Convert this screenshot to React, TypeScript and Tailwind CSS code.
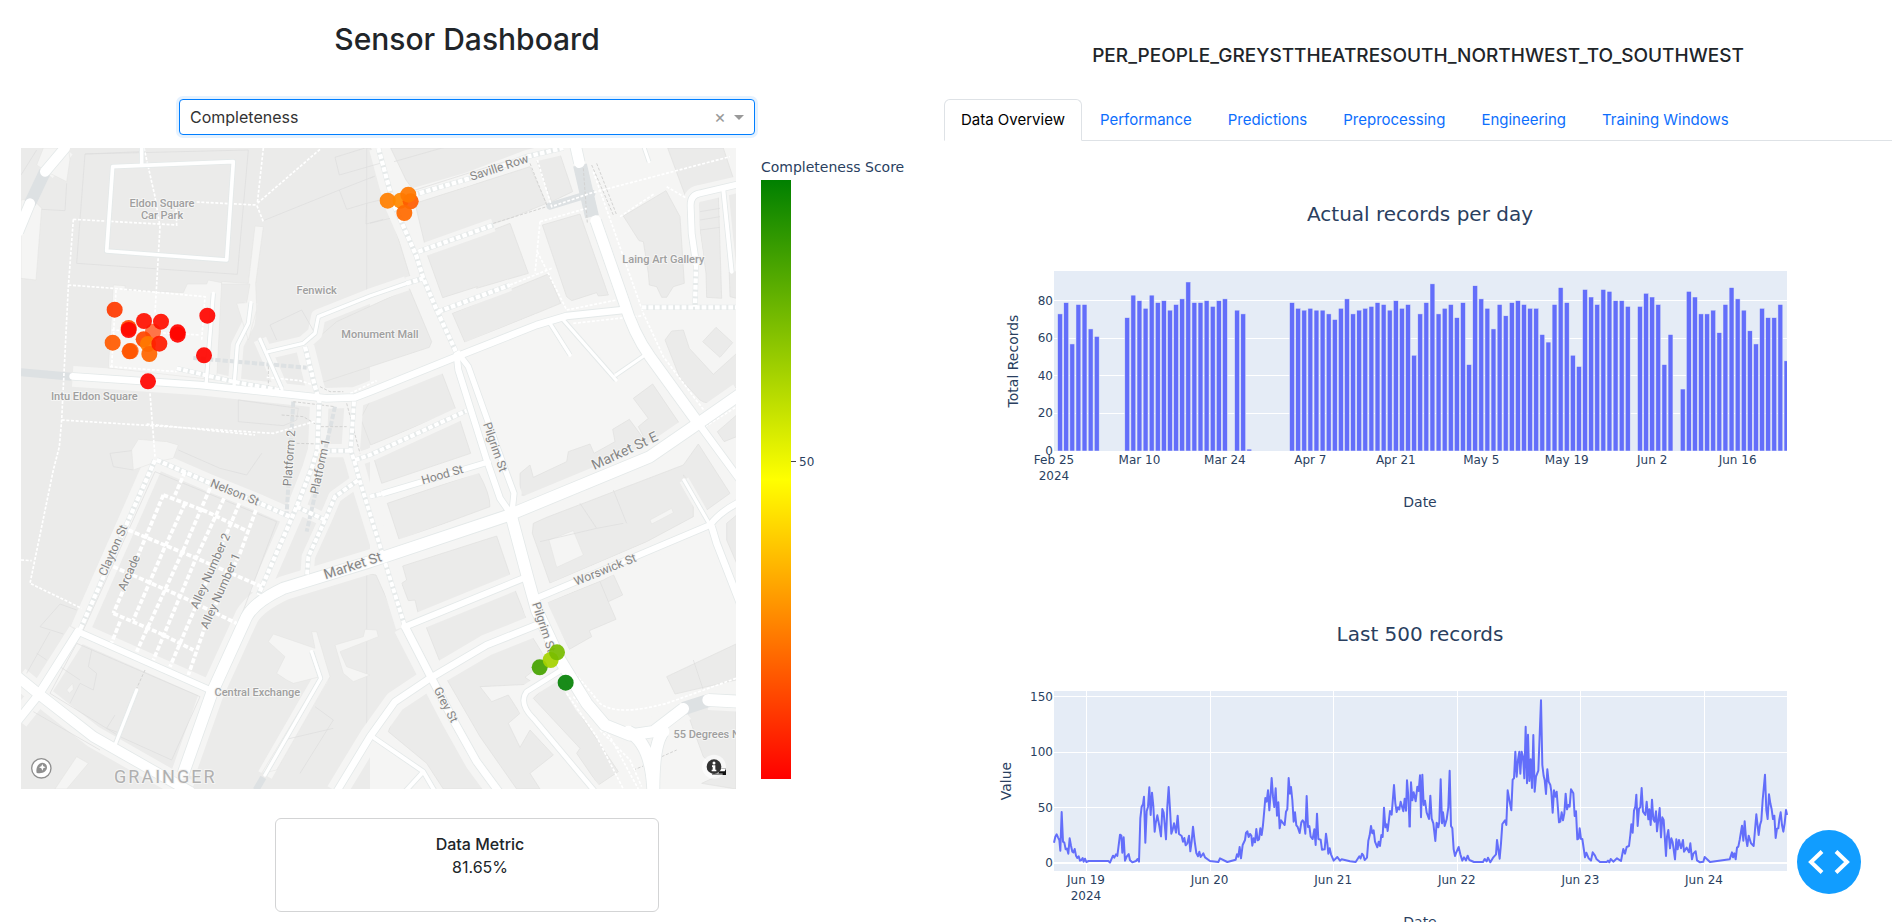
import React from "react";

const INTER = "font-['Inter','Liberation_Sans',sans-serif]";
const PLOT_FONT = "font-['Verdana','DejaVu_Sans',sans-serif]";

/* ---------- Map ---------- */

type Road = [path: string, width: number, verge: number];

const solidRoads: Road[] = [
  ["M195,24 135,95 M90,190 55,275", 30, 60],
  ["M425,24V75 M338,80 700,65 680,360 320,333Z", 11, 0],
  ["M218,709 600,735 980,775 1065,772 1110,755 1370,650 1610,555 1700,528 1870,510", 20, 62],
  ["M1220,430 1110,468 955,530 945,580 910,610 805,635", 10, 44],
  ["M780,598 845,745", 10, 40],
  ["M640,460 618,735", 10, 30],
  ["M753,488 745,550 712,615 702,740", 10, 38],
  ["M550,1900 635,1660 740,1430Q765,1385 850,1345L1110,1265 1520,1128 1950,950 2095,850 2220,763", 34, 72],
  ["M235,1475 635,1652", 18, 58],
  ["M55,1612 120,1665 280,1790 570,1955", 30, 66],
  ["M235,1475 115,1665 55,1740", 24, 62],
  ["M410,1650 345,1815", 10, 0],
  ["M935,1535 962,1615 795,1905", 10, 46],
  ["M1610,1455 1460,1515 1290,1615 1185,1685 1110,1790 1010,1955", 20, 64],
  ["M1215,1460 1295,1615 1360,1740 1430,1865 1500,1960", 22, 70],
  ["M1215,1460 1570,1315", 18, 52],
  ["M1150,1060 1465,966", 16, 48],
  ["M1370,645 1375,690 1460,960 1500,1075 1535,1125", 18, 50],
  ["M1375,640 1405,680 1505,960 1542,1060 1535,1125", 16, 46],
  ["M1533,1125 1585,1320 1610,1410 1680,1560 1760,1690 1815,1755 1890,1785 1960,1775 2050,1706", 34, 76],
  ["M1885,1775Q1955,1810 1960,1955 M1990,1775Q1960,1810 1960,1955", 36, 70],
  ["M2125,1680 2220,1685", 36, 60],
  ["M1725,10 1738,68", 32, 60],
  ["M1787,242 1870,480Q1900,580 1950,650L2095,850", 32, 70],
  ["M2095,850 2220,1020", 20, 56],
  ["M1650,550 1710,645 M1690,540 1848,720 M1848,705 1935,645", 10, 0],
  ["M2220,132 2100,160Q2070,165 2072,200L2075,280 2088,370", 18, 50],
  ["M2170,150 2195,395", 12, 30],
  ["M1928,10 1947,65", 9, 0],
  ["M1620,1370 2130,1155Q2160,1115 2220,1085", 18, 50],
  ["M2135,1160 2150,1210 2220,1390", 20, 52],
  ["M2052,1020 2130,1155", 10, 30],
  ["M1700,1580 1580,1655Q1555,1690 1600,1735L1785,1955", 14, 44],
  ["M1110,1785 1270,1895 1305,1955 M1270,1895 1215,1955", 12, 30],
];

const walkStreets: Road[] = [
  ["M1135,24 1180,190 1250,350 1270,415 1310,510 1370,640", 13, 56],
  ["M1240,165 1410,115 1580,50 1690,24", 13, 40],
  ["M1255,335 1480,255", 13, 40],
  ["M1315,515 1530,435", 13, 36],
  ["M1220,430 1270,415", 13, 36],
  ["M915,620 945,740 958,785 952,930 935,985 890,1100 775,1365", 13, 56],
  ["M1062,785 1052,930 1065,970 1080,1025 1142,1225 1215,1460", 12, 56],
  ["M955,932H1050 M1065,960 1110,945 1400,812", 12, 40],
  ["M470,960 620,1025 780,1090 870,1130", 13, 52],
  ["M465,960 240,1470", 13, 60],
  ["M890,1100 975,1140 1005,1070 1075,1020 M975,1140 925,1250 920,1320", 12, 40],
  ["M2088,375 2085,500 M1925,502H2220", 13, 36],
  ["M530,685 700,725 850,752", 12, 26],
  ["M1110,1070 1150,1060", 12, 36],
];

const marketAisles =
  "M555,995 525,1065 M490,1065 400,1280 340,1420 M555,1090 495,1220 400,1440 M360,1445 335,1508 M630,1045 550,1230 410,1535 M672,1075 590,1250 460,1560 M718,1090 630,1300 510,1580 M768,1110 720,1240 615,1460 565,1605 M490,1065 620,1115 735,1170 M385,1170 590,1255 785,1340 M340,1280 545,1370 710,1450 M340,1420 480,1480 580,1530";

const footpaths =
  "M432,24 465,170 480,260 465,520 M220,238 530,255 528,190 M590,186 770,195 790,245 M790,24 772,190 960,28 M220,238 205,440 185,840 178,920 160,990 90,1330 245,1405 M205,435 340,445 615,470 605,600 M335,570 600,585 M330,680 530,695 M348,450 335,680 M185,840 820,880 960,840 M440,852 765,885 M450,760 465,950 M63,1260 95,1262 M800,712 900,722 940,735 M1000,785 1130,722 M1530,435 1655,385 M1612,60 1655,200 1770,160 2190,50 M1620,245 1605,400 M1620,245 1760,205 M1612,335 1700,510 1850,480 M1780,95 1930,520 1990,650 2115,815 M1720,550 1930,527 M1860,230 1965,160 M2000,140 2060,175 M2115,860 2210,800 M1700,1570 1800,1690Q1850,1730 2000,1690L2208,1615 M1700,1660 1790,1790 1870,1947 M1720,1670 1830,1790 1915,1947 M1800,1770 1890,1860 1925,1940";

const servicePaths =
  "M1590,70 1640,195 M1480,250 1640,200 M1750,85 1762,250 M1775,75 1840,225 M1790,70 1850,225 M805,665V740 M960,740 990,755H1030 M880,785 1005,800 M845,825 910,830 960,860 1040,860 M890,910 960,912 M1040,790 1080,940 M435,1590 410,1645 M1985,1850 2030,1830 M1900,1890 1930,1878";

const buildings = [
  "1100,24 1112,24 1230,410 1100,455",
  "1172,24 1660,24 1590,46 1240,150 1218,120",
  "1245,190 1590,80 1640,190 1530,235 1275,315",
  "1282,345 1530,250 1585,400 1430,445 1432,440 1328,473",
  "1357,520 1645,402 1682,490 1395,608",
  "1610,62 1680,42 1718,155 1655,185",
  "1627,255 1740,222 1825,465 1795,468 1790,458 1715,482 1700,470",
  "1010,545 1228,445 1295,605 1288,622 970,726 935,650 930,612 958,590",
  "1082,835 1120,765 1325,697 1368,810 1112,915",
  "1120,950 1378,835 1412,940 1145,1030",
  "1870,228 1998,152 2040,230 2053,430 2020,440 2000,472 1985,472 1970,440 1948,435 1945,400 1930,305 1917,302",
  "2003,24 2170,24 2200,115 2055,165",
  "2090,180 2155,165 2165,475 2120,472 2118,400 2100,270",
  "2180,150 2210,148 2210,475 2190,470",
  "1995,600 2015,573 2050,570 2068,625 2140,703 2210,640 2210,740 2150,785Q2120,795 2100,780L2040,715",
  "2108,605 2148,562 2198,608 2160,652",
  "1900,775 1958,732 2038,850 2035,868 1945,918 1915,860 1945,835",
  "1560,1000 1590,975 1600,1012 1700,965 1705,935 1770,912 1782,940 1845,905 1838,868 1888,838 1930,895 1940,915 1600,1068 1560,1065",
  "2152,875 2210,825 2210,890 2172,905",
  "1600,1150 1640,1132 2050,975 2095,912 2190,1060 2120,1110 2055,1010 2050,1005 2080,1080 2080,1130 1940,1205 1650,1330 1597,1180",
  "1162,1090 1435,998Q1470,1060 1470,1100L1198,1200",
  "1208,1278 1490,1188 1530,1305 1255,1422 1245,1380 1225,1382 1205,1330 1220,1320",
  "1278,1460 1545,1350 1585,1450 1460,1500 1325,1578",
  "1635,1390 1810,1320 1840,1303 1868,1365 1825,1385 1848,1438 1768,1472 1775,1490 1708,1528",
  "2000,1610 2208,1512 2208,1620 2025,1662",
  "2055,1700 2150,1700 2208,1705 2208,1947 2105,1930 2170,1900 2110,1850",
  "1100,1300 1128,1305 1270,1620 1185,1660 1100,1760",
  "1330,1600 1590,1480 1640,1560 1575,1612 1605,1632 1440,1640 1475,1685 1525,1665 1560,1720 1525,1750 1560,1822 1590,1770 1660,1845 1590,1900 1620,1947 1550,1947 1440,1790",
  "1600,1675 1665,1610 1855,1895 1795,1935 1730,1840 1740,1825",
  "1185,1720 1275,1645 1330,1700 1440,1900 1480,1947 1330,1947 1280,1870 1165,1775",
  "2180,1150 2210,1125 2210,1270 2180,1200",
];

const courts = [
  "130,24 205,24 210,58 200,125 150,100 110,75",
  "63,180 95,175 125,205 108,420 63,415",
  "340,435 375,437 375,450 550,458 562,432 620,432 625,420 665,428 650,720 325,684",
  "765,258 790,260 767,430 770,510 745,600 710,490 740,488 750,432 665,432 665,425 745,430",
  "395,930 415,898 500,905 535,915 520,955 470,965 400,990",
  "805,1505 820,1482 945,1525 935,1475 950,1475 990,1610 830,1890 785,1900 960,1610 880,1630 860,1620 830,1600 855,1550",
  "1005,1515 1090,1490 1095,1468 1130,1470 1135,1490 1020,1535 1040,1580 1110,1605 1060,1625 1030,1600",
  "1647,1200 1720,1172 1750,1245 1670,1282",
  "1950,1140 2015,1105 2020,1118 1955,1152",
  "200,1650 218,1630 220,1648 208,1660",
  "230,1850 265,1870 200,1947 165,1947",
];

const plots =
  "M255,42 230,370 712,403 745,30Z M255,42 420,35 M63,105 110,30 M200,130 195,212 125,208 M1005,52 1140,10 M1005,52 1018,105 1140,70 M1018,150 1120,110 M1018,150 1040,208 1100,190 1140,180 M1100,190 1098,252 1150,238 M790,242 1018,150 M810,555 905,510 945,580 M810,555 830,600 M715,780 895,805 890,840 850,857 715,845Z M330,940 395,932 M330,940 340,980 400,990 M535,930 660,985 740,1005 785,940 M120,1460 180,1392 230,1410 M120,1460 190,1482 M150,1475 80,1600 M110,1540 140,1560 M275,1530 265,1580 290,1600 280,1650 240,1630 210,1690 M180,1580 240,1620 M345,1725 320,1765 360,1780 M250,1470 270,1500 640,1650 830,1145 465,995Z M150,1660 230,1510 600,1670 515,1860 360,1790Z M1182,65 1410,0 M1230,155 1530,60 M100,1715 300,1830 M850,1800 1000,1765 M945,1700 1000,1740 900,1900 M1740,1090 1790,1165 1870,1150 M1840,1050 1880,1150 M1790,1165 1620,1205 M2100,215 2160,205 M2100,240 2160,230 M2100,270 2160,262 M1800,1325 1825,1385 M2080,1560 2110,1650 M1110,115 1125,108 M1110,250 1170,235";

const placeLabels: { text: string; x: number; y: number }[] = [
  { text: "Eldon Square", x: 486, y: 200 },
  { text: "Car Park", x: 486, y: 236 },
  { text: "Fenwick", x: 950, y: 461 },
  { text: "Monument Mall", x: 1140, y: 594 },
  { text: "Intu Eldon Square", x: 283, y: 780 },
  { text: "Laing Art Gallery", x: 1990, y: 369 },
  { text: "Central Exchange", x: 772, y: 1668 },
  { text: "55 Degrees North", x: 2150, y: 1794 },
];

const streetLabels: { text: string; x: number; y: number; turn: number; size: number }[] = [
  { text: "Saville Row", x: 1501, y: 94, turn: -18, size: 36 },
  { text: "Pilgrim St", x: 1474, y: 925, turn: 71, size: 36 },
  { text: "Pilgrim St", x: 1620, y: 1465, turn: 72, size: 36 },
  { text: "Grey St", x: 1327, y: 1700, turn: 62, size: 36 },
  { text: "Hood St", x: 1330, y: 1016, turn: -16, size: 36 },
  { text: "Market St E", x: 1880, y: 945, turn: -25, size: 42 },
  { text: "Market St", x: 1062, y: 1290, turn: -18, size: 42 },
  { text: "Worswick St", x: 1820, y: 1300, turn: -22, size: 36 },
  { text: "Nelson St", x: 700, y: 1068, turn: 22, size: 36 },
  { text: "Clayton St", x: 350, y: 1236, turn: -66, size: 36 },
  { text: "Arcade", x: 398, y: 1303, turn: -66, size: 36 },
  { text: "Alley Number 2", x: 642, y: 1298, turn: -66, size: 36 },
  { text: "Alley Number 1", x: 672, y: 1358, turn: -66, size: 36 },
  { text: "Platform 2", x: 880, y: 955, turn: -86, size: 36 },
  { text: "Platform 1", x: 972, y: 982, turn: -78, size: 36 },
];

const sensors: [number, number, string][] = [
  [344, 509, "#ff3a00"], [386, 564, "#ff4a00"], [386, 570, "#ff0500"], [459, 575, "#ff6a3a"],
  [432, 543, "#ff1000"], [483, 545, "#ff1000"], [533, 584, "#ff0500"], [533, 577, "#ff0500"],
  [622, 527, "#ff0500"], [338, 608, "#ff5a00"], [392, 633, "#ff6a20"], [389, 634, "#ff5500"],
  [431, 598, "#ff4500"], [444, 612, "#ff7800"], [448, 642, "#ff6500"], [478, 611, "#ff1c00"],
  [612, 646, "#ff0500"], [444, 724, "#ff0500"],
  [1163, 182, "#ff7f00"], [1202, 182, "#ff8800"], [1232, 184, "#ff5c00"], [1225, 164, "#ff7800"],
  [1213, 219, "#ff6a00"],
  [1619, 1582, "#46a200"], [1652, 1560, "#a5d200"], [1671, 1537, "#78bc00"], [1697, 1628, "#078207"],
];

function SensorMap() {
  return (
    <svg
      viewBox="63 24 2145 1923"
      preserveAspectRatio="xMidYMid slice"
      role="img"
      aria-label="Map of sensors"
      className="h-[641px] min-w-0 flex-1 font-['Roboto','Liberation_Sans',sans-serif]"
    >
      <rect x="63" y="24" width="2145" height="1923" fill="#f5f5f4" />
      <path d="M63,24H1110V1947H63Z" fill="#ebebea" />
      {buildings.map((b) => (
        <path key={b} d={`M${b}Z`} fill="#ebebea" stroke="#dfdfde" strokeWidth="2" />
      ))}
      <g stroke="#f5f5f4" fill="none" strokeLinejoin="round">
        {[...solidRoads, ...walkStreets].map(([d, , verge]) =>
          verge ? <path key={d} d={d} strokeWidth={verge} /> : null,
        )}
      </g>
      {courts.map((c) => (
        <path key={c} d={`M${c}Z`} fill="#f5f5f4" stroke="#e2e2e1" strokeWidth="1.5" />
      ))}
      <path d={plots} fill="none" stroke="#dddddc" strokeWidth="2" />
      <g fill="none" stroke="#dde1e3">
        <path d="M135,95 90,190" strokeWidth="36" />
        <path d="M63,697 215,710" strokeWidth="24" />
        <path d="M1740,75 1776,230" strokeWidth="42" />
        <path d="M1650,198 1775,160" strokeWidth="22" strokeLinecap="round" />
        <path d="M2050,1706 2130,1680" strokeWidth="40" />
        <path d="M790,1912 768,1950" strokeWidth="20" />
        <path d="M580,654 920,683 M880,785 860,1120 M1005,800 920,1175" strokeWidth="12" strokeDasharray="16 6" />
      </g>
      <path d={servicePaths} fill="none" stroke="#d3d3d2" strokeWidth="3" strokeDasharray="9 5" />
      <path d={footpaths} fill="none" stroke="#ffffff" strokeWidth="5" strokeDasharray="9 5" />
      <g fill="none" stroke="#e4e9e9">
        {solidRoads.map(([d, w]) => (
          <path key={d} d={d} strokeWidth={w + 5} strokeLinejoin="round" />
        ))}
      </g>
      <g fill="none" stroke="#e6eaea">
        {walkStreets.map(([d, w]) => (
          <path key={d} d={d} strokeWidth={w + 3} />
        ))}
      </g>
      <g fill="none" stroke="#ffffff">
        {walkStreets.map(([d, w]) => (
          <path key={d} d={d} strokeWidth={w} strokeDasharray="14 6" />
        ))}
        <path d={marketAisles} strokeWidth="11" strokeDasharray="15 6" />
        {solidRoads.map(([d, w]) => (
          <path key={d} d={d} strokeWidth={w} strokeLinejoin="round" strokeLinecap="round" />
        ))}
      </g>
      <g textAnchor="middle" stroke="#f5f5f4" strokeWidth="6" paintOrder="stroke" strokeLinejoin="round">
        {placeLabels.map((l) => (
          <text key={l.text} x={l.x} y={l.y} fill="#9f9f9f" fontSize="33" fontWeight="500">
            {l.text}
          </text>
        ))}
        {streetLabels.map((l) => (
          <text
            key={`${l.text}${l.x}`}
            transform={`translate(${l.x} ${l.y}) rotate(${l.turn})`}
            fill="#858585"
            fontSize={l.size}
          >
            {l.text}
          </text>
        ))}
        <text x="496" y="1928" fill="#b0b0b0" fontSize="54" className="tracking-[6px]">
          GRAINGER
        </text>
      </g>
      {sensors.map(([x, y, color], i) => (
        <circle key={i} cx={x} cy={y} r="24" fill={color} fillOpacity="0.93" />
      ))}
      <g transform="translate(124 1885)">
        <circle r="29" fill="#ffffff" stroke="#8f8f8f" strokeWidth="4" />
        <path d="M-14,14C-18,-4 -8,-17 4,-17A15,15 0 0 1 17,-3C17,9 4,18 -14,14Z" fill="#8f8f8f" />
        <path d="M3,-13 6,-6 13,-3 6,0 3,7 0,0 -7,-3 0,-6Z" fill="#ffffff" />
      </g>
      <g transform="translate(2142 1880)">
        <circle r="36" fill="#ffffff" fillOpacity="0.6" />
        <path d="M14,6H36V25H14Z" fill="#111111" />
        <path d="M14,6H36L32,14H14Z" fill="#ffffff" />
        <path d="M-6,20H26V25H-6Z" fill="#8a8a8a" />
        <circle r="22" fill="#333333" />
        <circle cy="-11" r="4.5" fill="#ffffff" />
        <path d="M-6,-4H4V9H7V14H-7V9H-4V1H-6Z" fill="#ffffff" />
      </g>
    </svg>
  );
}

function ColorScale() {
  return (
    <div className={`${PLOT_FONT} flex w-[173px] shrink-0 flex-col pt-2 text-[#2a3f5f]`}>
      <p className="h-6 whitespace-nowrap text-[14px] leading-[22px]">Completeness Score</p>
      <div className="flex h-[599px]">
        <div className="w-[30px] bg-linear-to-b/srgb from-[#008000] via-[#ffff00] to-[#ff0000]" />
        <div className="flex h-[563px] items-center gap-[3px]">
          <span className="h-px w-[5px] bg-[#444444]" />
          <span className="text-[12px]">50</span>
        </div>
      </div>
    </div>
  );
}

/* ---------- Charts ---------- */

const dailyRecords: (number | null)[] = [
  null, 73, 79, 57, 78, 78, 65, 61, null, null, null, null, 71, 83, 80, 76, 83, 79, 80, 75, 78, 81, 90, 79, 79, 80,
  77, 80, 81, null, 75, 73, 1, null, null, null, null, null, null, 79, 76, 75, 76, 75, 75, 73, 70, 76, 81, 73, 75,
  76, 77, 79, 78, 75, 80, 76, 78, 51, 73, 79, 89, 73, 76, 78, 71, 79, 46, 88, 81, 76, 65, 78, 72, 79, 80, 78, 76,
  76, 62, 58, 78, 87, 79, 51, 45, 86, 82, 78, 86, 85, 80, 80, 77, null, 77, 84, 82, 78, 46, 62, null, 33, 85, 82,
  73, 73, 75, 63, 78, 87, 81, 75, 64, 57, 76, 71, 71, 78, 48,
];

const dayTicks = ["Feb 25", "Mar 10", "Mar 24", "Apr 7", "Apr 21", "May 5", "May 19", "Jun 2", "Jun 16"];

function ChartFrame({ title, label, labelX, children }: { title: string; label: string; labelX: number; children: React.ReactNode }) {
  return (
    <svg viewBox="0 0 948 420" role="img" aria-label={title} className={`${PLOT_FONT} h-[420px] w-full`}>
      <text x="476" y="50" textAnchor="middle" fontSize="20" fill="#2a3f5f">{title}</text>
      <rect x="110" y="100" width="733" height="180" fill="#e5ecf6" />
      {children}
      <text x="476" y="336" textAnchor="middle" fontSize="14" fill="#2a3f5f">Date</text>
      <text transform={`translate(${labelX} 190) rotate(-90)`} textAnchor="middle" fontSize="14" fill="#2a3f5f">
        {label}
      </text>
    </svg>
  );
}

function DailyChart() {
  const step = 6.104;
  const unit = 1.878;
  return (
    <ChartFrame title="Actual records per day" label="Total Records" labelX={74}>
      <clipPath id="daily-area">
        <rect x="110" y="100" width="733" height="180" />
      </clipPath>
      {[0, 20, 40, 60, 80].map((v) => (
        <React.Fragment key={v}>
          {v > 0 && <path d={`M110,${Math.floor(280 - v * unit)}.5h733`} stroke="#ffffff" />}
          <text x="109" y={284 - v * unit} textAnchor="end" fontSize="12" fill="#2a3f5f">{v}</text>
        </React.Fragment>
      ))}
      <g clipPath="url(#daily-area)">
        {dailyRecords.map((v, i) =>
          v === null ? null : (
            <rect
              key={i}
              x={110 + i * step - 2.44}
              y={280 - v * unit}
              width="4.88"
              height={v * unit}
              fill="#636efa"
              stroke="#e5ecf6"
              strokeWidth="0.5"
            />
          ),
        )}
      </g>
      <g textAnchor="middle" fontSize="12" fill="#2a3f5f">
        {dayTicks.map((t, i) => (
          <text key={t} x={110 + i * 14 * step} y="293">{t}</text>
        ))}
        <text x="110" y="309">2024</text>
      </g>
    </ChartFrame>
  );
}

const firstDays =
  "192,698 196,680 200,673 204,682 208,690 211,722 215,606 219,695 223,698 227,718 231,716 235,731 239,685 243,707 247,725 250,727 254,717 258,737 262,744 266,739 270,752 274,750 278,744 281,755 285,746 289,756 296,753 355,753 360,758 365,746 369,737 373,743 378,733 382,738 386,706 390,674 394,677 397,728 401,682 405,752 410,740 416,732 420,751 427,757 438,753 443,747 447,755 451,625 455,590 459,583 462,560 466,698 470,604 474,590 478,532 482,615 486,548 490,588 494,665 497,640 502,616 508,648 513,679 517,597 521,608 528,688 532,590 536,531 540,597 544,671 548,659 552,640 558,668 563,617 567,672 575,678 579,695 583,684 587,706 592,700 597,677 601,724 605,694 609,650 614,694 619,729 624,739 628,725 632,741 640,730 645,742 660,753 685,756 690,745 712,756 737,749 741,733 745,740 749,711 753,745 758,705 765,690 768,669 772,664 776,681 780,672 784,677 787,707 791,685 795,697 799,657 803,691 807,688 811,655 815,675 819,645 823,600 826,564 830,575 834,541 838,601 842,550 845,504 849,560 853,591 857,535 861,617 865,577 869,655 873,631 878,638 884,645 888,605 892,598 896,504 900,551 903,531 907,570 911,635 915,607 919,646 923,651 929,669 934,637 938,631 942,637 946,671 950,558 954,651 958,648 962,680 968,687 973,658 977,705 981,611 985,687 992,689 996,719 1004,718 1008,671 1012,700 1015,731 1019,715 1023,733 1031,752 1042,741 1050,752 1055,748 1080,754 1097,756 1108,739 1112,745 1116,731 1120,736 1124,750 1131,743 1135,692 1139,676 1143,648 1147,670 1151,661 1155,695 1162,712 1166,695 1170,708 1174,675 1178,681 1182,593 1186,652 1190,643 1193,663 1200,603 1205,614 1212,525 1216,580 1220,606 1224,592 1228,598 1232,575 1240,604 1244,566 1248,602 1251,511 1255,560 1259,652";

const lastDays =
  "29,652 33,517 37,571 41,547 47,574 52,530 56,543 60,496 63,622 67,494 71,585 75,572 80,608 87,627 91,557 95,626 100,640 106,693 110,638 115,652 118,635 122,508 126,640 129,607 134,648 140,628 145,592 149,482 153,648 157,655 161,718 165,738 170,725 176,711 181,733 187,752 192,742 198,751 203,737 208,750 222,756 249,756 254,747 260,754 264,743 271,757 280,742 288,733 291,690 299,746 303,700 307,642 315,631 319,645 323,541 328,570 334,601 338,509 342,505 346,425 350,500 354,450 358,425 361,491 365,425 369,440 373,505 377,350 381,520 384,374 388,513 392,448 396,534 400,375 404,545 408,500 415,482 423,271 427,465 431,498 434,510 438,552 442,478 446,515 451,525 454,545 458,608 462,541 466,560 470,545 477,637 481,635 485,607 489,631 493,610 497,551 501,598 505,585 509,590 513,538 520,550 524,618 528,604 532,688 536,685 539,655 543,687 547,687 555,742 559,728 566,745 573,752 578,727 585,737 590,748 600,756 620,756 624,752 628,757 632,747 640,755 651,745 663,753 670,717 675,731 680,711 687,708 691,675 694,643 698,668 702,602 706,590 709,554 713,648 717,596 721,592 725,534 729,605 736,615 740,575 745,628 748,598 752,645 756,569 760,628 764,635 768,604 771,664 775,630 779,594 783,682 787,622 791,630 798,738 801,680 805,660 810,715 814,685 818,697 825,748 829,688 833,718 837,690 843,715 849,690 852,725 860,713 867,727 871,700 876,748 880,731 887,724 891,751 900,757 910,755 914,741 930,756 989,748 996,727 999,742 1003,730 1007,748 1011,713 1015,710 1019,690 1026,647 1030,692 1034,634 1038,685 1042,708 1046,677 1053,700 1061,708 1065,660 1069,613 1076,675 1080,645 1084,632 1088,570 1095,494 1099,600 1103,627 1107,553 1111,580 1115,598 1119,627 1123,617 1127,684 1131,656 1135,655 1138,628 1142,607 1146,645 1150,665 1154,640 1158,600 1161,615";

function RecentChart() {
  return (
    <ChartFrame title="Last 500 records" label="Value" labelX={67}>
      {["Jun 19", "Jun 20", "Jun 21", "Jun 22", "Jun 23", "Jun 24"].map((t, i) => (
        <React.Fragment key={t}>
          <path d={`M${Math.floor(142.4 + i * 123.6)}.5,100v180`} stroke="#ffffff" />
          <text x={142 + i * 123.6} y="293" textAnchor="middle" fontSize="12" fill="#2a3f5f">{t}</text>
        </React.Fragment>
      ))}
      <text x="142" y="309" textAnchor="middle" fontSize="12" fill="#2a3f5f">2024</text>
      {[0, 50, 100, 150].map((v) => (
        <React.Fragment key={v}>
          <path d={v ? `M110,${Math.floor(272 - v * 1.11)}.5h733` : "M110,272h733"} stroke="#ffffff" strokeWidth={v ? 1 : 2} />
          <text x="109" y={276 - v * 1.11} textAnchor="end" fontSize="12" fill="#2a3f5f">{v}</text>
        </React.Fragment>
      ))}
      <g fill="none" stroke="#636efa" strokeWidth="6" strokeLinejoin="round">
        <polyline transform="translate(46 19) scale(0.33333)" points={firstDays} />
        <polyline transform="translate(456 19) scale(0.33333)" points={lastDays} />
      </g>
    </ChartFrame>
  );
}

/* ---------- Page ---------- */

const otherTabs = ["Performance", "Predictions", "Preprocessing", "Engineering", "Training Windows"];

export default function App() {
  return (
    <div className={`${INTER} grid h-screen grid-cols-[calc(50%-2px)_1fr] overflow-hidden bg-white text-[#212529]`}>
      <main className="flex min-w-0 flex-col overflow-hidden pr-[10px]">
        <h1 className="pt-5 text-center text-[30px] leading-[38px] font-medium">Sensor Dashboard</h1>
        <div className="relative mx-auto mt-[41px] w-[576px] max-w-full">
          <label htmlFor="metric" className="sr-only">Metric</label>
          <select
            id="metric"
            defaultValue="Completeness"
            className="block h-[36px] w-full appearance-none rounded-[4px] border border-[#007eff] bg-white px-[10px] text-[16px] text-[#333333] shadow-[0_0_0_3px_rgba(0,126,255,0.1)] outline-none"
          >
            <option>Completeness</option>
          </select>
          <div className="pointer-events-none absolute inset-y-0 right-[11px] flex items-center gap-2">
            <button type="button" aria-label="Clear" className="pointer-events-auto text-[18px] leading-none text-[#999999]">
              ×
            </button>
            <span className="size-0 border-x-5 border-t-5 border-x-transparent border-t-[#999999]" />
          </div>
        </div>
        <div className="mt-[13px] flex gap-[25px] pl-[21px]">
          <SensorMap />
          <ColorScale />
        </div>
        <section className="mx-auto mt-[29px] flex h-[94px] w-[384px] shrink-0 flex-col rounded-[6px] border border-[#d3d4d5] pt-[14px] pl-[26px] text-center text-[16px] leading-[23px]">
          <h2 className="font-medium">Data Metric</h2>
          <p>81.65%</p>
        </section>
      </main>

      <aside className="min-w-0 overflow-y-auto [scrollbar-width:none]">
        <h2 className="pt-11 text-center text-[19px] leading-6 font-medium">
          PER_PEOPLE_GREYSTTHEATRESOUTH_NORTHWEST_TO_SOUTHWEST
        </h2>
        <nav className="mt-[31px] flex border-b border-[#dee2e6] text-[15px] leading-6 text-[#0d6efd]">
          <a href="#overview" className="-mb-px rounded-t-[6px] border border-[#dee2e6] border-b-white bg-white px-4 py-2 text-black">
            Data Overview
          </a>
          {otherTabs.map((t) => (
            <a key={t} href={`#${t}`} className="px-[18px] pt-[9px] pb-2">
              {t}
            </a>
          ))}
        </nav>
        <div className="pt-[30px]">
          <DailyChart />
          <RecentChart />
        </div>
      </aside>

      <button
        type="button"
        aria-label="Debug menu"
        className="fixed right-[31px] bottom-7 flex size-16 items-center justify-center rounded-full bg-[#119dff]"
      >
        <svg viewBox="0 0 64 64" className="size-16" fill="none" stroke="#ffffff" strokeWidth="4">
          <path d="M25,21.5 14,32 25,42.5 M39,21.5 50,32 39,42.5" />
        </svg>
      </button>
    </div>
  );
}
